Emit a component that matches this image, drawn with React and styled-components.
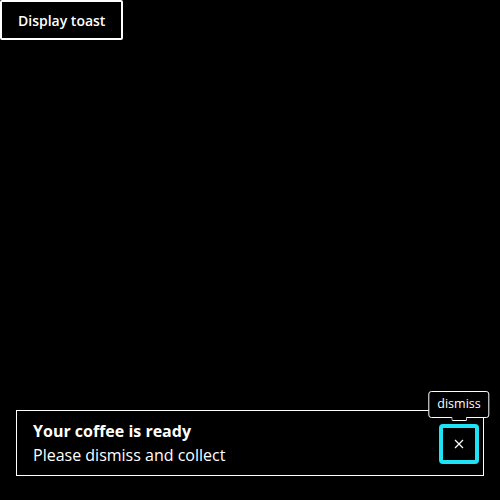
import React from "react";
import styled, { createGlobalStyle } from "styled-components";

const GlobalStyle = createGlobalStyle`
  html, body {
    margin: 0;
    background: #000;
    color: #fff;
    font-family: "Open Sans", "Noto Sans", sans-serif;
  }
`;

const Page = styled.div`
  position: relative;
  width: 500px;
  height: 500px;
  background: #000;
  overflow: hidden;
`;

const TriggerButton = styled.button`
  display: block;
  height: 40px;
  padding: 0 16px;
  background: #000;
  color: #fff;
  border: 2px solid #fff;
  border-radius: 2px;
  font-family: "Open Sans", "Noto Sans", sans-serif;
  font-weight: 600;
  font-size: 14px;
  cursor: pointer;
`;

const Viewport = styled.div`
  position: absolute;
  left: 16px;
  right: 16px;
  bottom: 24px;
`;

const Toast = styled.div`
  display: flex;
  align-items: center;
  justify-content: space-between;
  height: 64px;
  padding: 0 4px 0 16px;
  border: 1px solid #fff;
  background: #000;
`;

const Body = styled.div`
  display: flex;
  flex-direction: column;
  gap: 2px;
  margin-bottom: 1px;
`;

const Title = styled.div`
  font-weight: 700;
  font-size: 16px;
  line-height: 22px;
`;

const Description = styled.div`
  font-size: 16px;
  line-height: 22px;
`;

const CloseWrap = styled.div`
  position: relative;
  margin-top: 2px;
`;

const CloseButton = styled.button`
  display: flex;
  align-items: center;
  justify-content: center;
  width: 40px;
  height: 40px;
  padding: 0;
  background: #000;
  color: #fff;
  border: 4px solid #1fe3f5;
  border-radius: 4px;
`;

const Tooltip = styled.div`
  position: absolute;
  bottom: 46px;
  left: 50%;
  transform: translateX(-50%);
  padding: 3px 8px 4px;
  border: 1px solid #fff;
  border-radius: 3px;
  background: #000;
  font-size: 12.5px;
  font-weight: 500;
  line-height: 18px;
  white-space: nowrap;

  &::after {
    content: "";
    position: absolute;
    left: 50%;
    bottom: -4px;
    width: 14px;
    height: 3px;
    transform: translateX(-50%);
    background: #000;
    border: 1px solid #fff;
    border-top: none;
    border-radius: 0 0 2px 2px;
  }
`;

export default function App() {
  return (
    <Page>
      <GlobalStyle />
      <TriggerButton>Display toast</TriggerButton>
      <Viewport>
        <Toast>
          <Body>
            <Title>Your coffee is ready</Title>
            <Description>Please dismiss and collect</Description>
          </Body>
          <CloseWrap>
            <Tooltip>dismiss</Tooltip>
            <CloseButton aria-label="dismiss">
              <svg width="10" height="10" viewBox="0 0 10 10">
                <path d="M1 1L9 9M9 1L1 9" stroke="#fff" strokeWidth="1.2" />
              </svg>
            </CloseButton>
          </CloseWrap>
        </Toast>
      </Viewport>
    </Page>
  );
}
